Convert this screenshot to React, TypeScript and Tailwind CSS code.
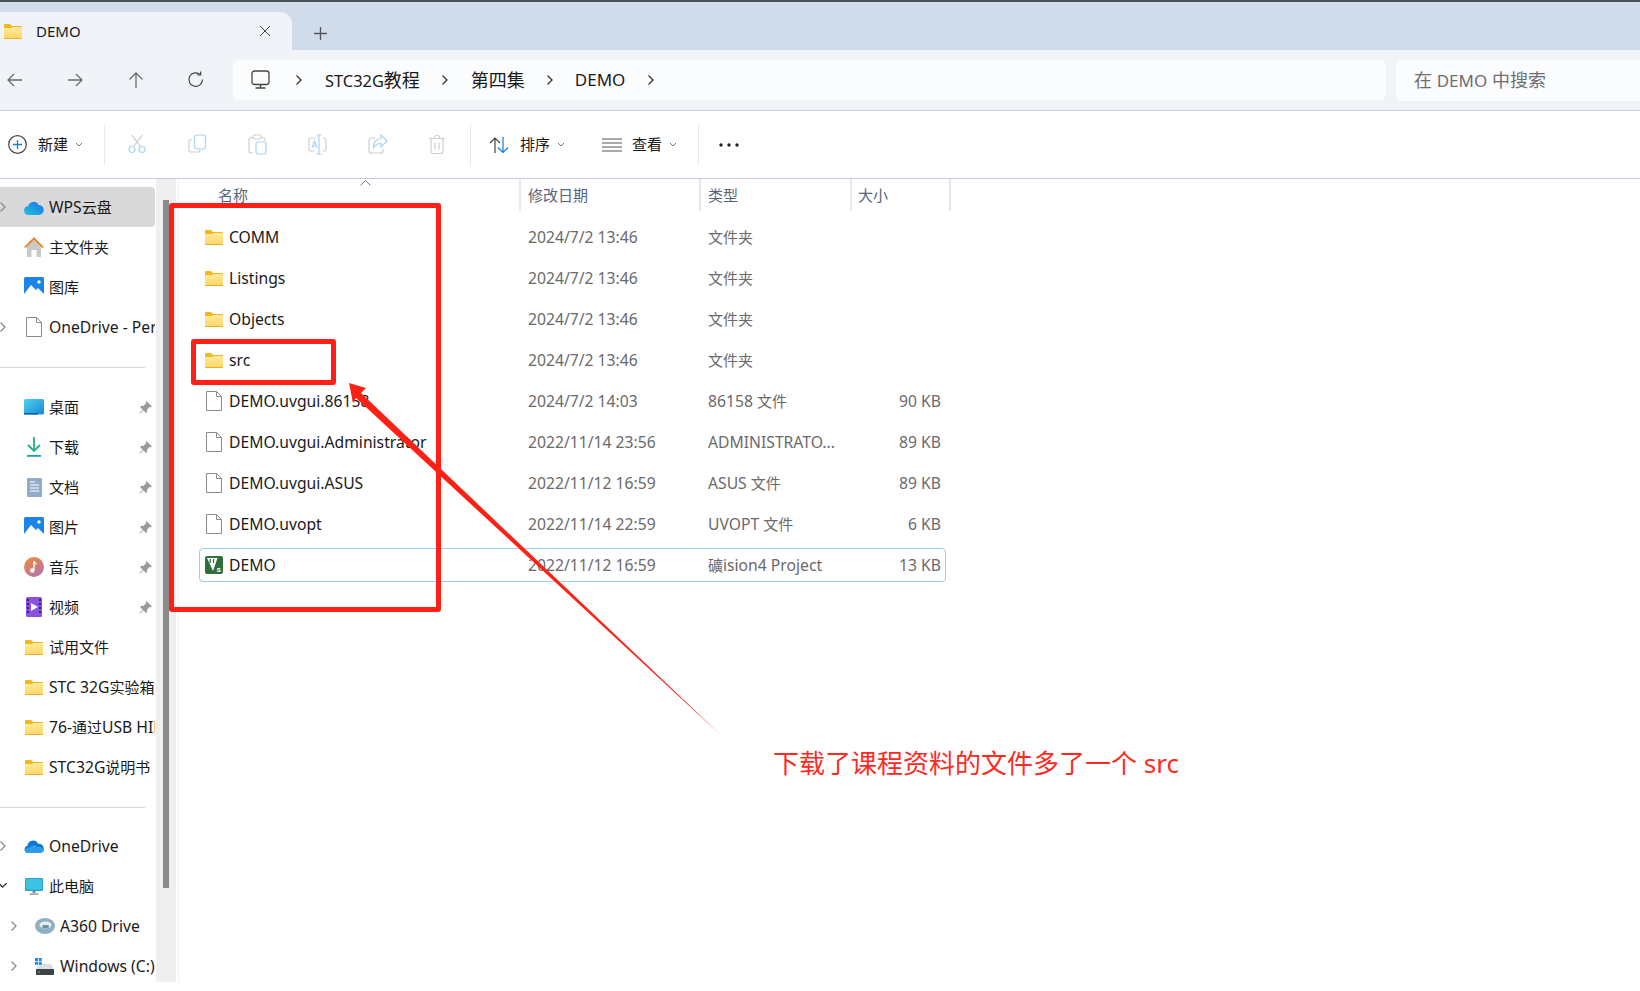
/**
 * Explorer window with red annotations on top (rect, arrow, caption).
 */
import type { ReactNode } from "react";

// ── Icons ────────────────────────────────────────────────────────────────────

function FolderIcon({ id }: { id: string }) {
  return (
    <svg width="18" height="15" viewBox="0 0 18 15" className="shrink-0">
      <defs>
        <linearGradient id={id} x1="0" y1="0" x2="0" y2="1">
          <stop offset="0" stopColor="#ffe99a" />
          <stop offset="1" stopColor="#fcd667" />
        </linearGradient>
      </defs>
      <path d="M0 1a1 1 0 0 1 1-1h5l2 2h9a1 1 0 0 1 1 1v3H0z" fill="#f2b71f" />
      <path d="M0 4h7l1.500-1H17a1 1 0 0 1 1 1v10a1 1 0 0 1-1 1H1a1 1 0 0 1-1-1z" fill={`url(#${id})`} />
      <path d="M0 14h18v.2a.8.8 0 0 1-.8.8H.8a.8.8 0 0 1-.8-.8z" fill="#e9ae2a" />
    </svg>
  );
}

function FileIcon() {
  return (
    <svg width="18" height="20" viewBox="0 0 18 20" className="shrink-0">
      <path d="M1.500.5h10l5 5v14h-15z" fill="#fff" stroke="#8b8b8b" />
      <path d="M11.500.5v5h5" fill="none" stroke="#8b8b8b" />
    </svg>
  );
}

function UvisionIcon() {
  return (
    <svg width="18" height="18" viewBox="0 0 18 18" className="shrink-0">
      <rect width="18" height="18" rx="2" fill="#2f6f3e" />
      <path d="M2 2h10.500L8 15z" fill="#fff" />
      <path d="M5.200 3v4M8.500 3v4" stroke="#2f6f3e" strokeWidth="1.300" />
      <text x="11.500" y="16" fontSize="8" fontWeight="700" fill="#fff" fontFamily="'Liberation Sans', sans-serif">s</text>
    </svg>
  );
}

function Glyph({ w = 20, h = 20, children }: { w?: number; h?: number; children: ReactNode }) {
  return (
    <svg width={w} height={h} viewBox={`0 0 ${w} ${h}`} fill="none" className="shrink-0">
      {children}
    </svg>
  );
}

function Chevron({ dark = false }: { dark?: boolean }) {
  return (
    <Glyph w={8} h={12}>
      <path d="M1.500 1.500 6 6l-4.500 4.500" stroke={dark ? "#333" : "#8a8a8a"} strokeWidth="1.300" />
    </Glyph>
  );
}

function CaretDown() {
  return (
    <Glyph w={8} h={6}>
      <path d="M1 1l3 3 3-3" stroke="#777" strokeWidth="1" />
    </Glyph>
  );
}

function PinIcon() {
  return (
    <svg width="13" height="13" viewBox="0 0 13 13" className="shrink-0">
      <path d="M7.500 0 13 5.500l-1.200.7-1-.3L8 8.700l.3 2L7 12 4.200 9.200 1 12.600.4 12l3.400-3.200L1 6l1.300-1.300 2 .3 2.800-2.800-.3-1z" fill="#9b9b9b" />
    </svg>
  );
}

const NAV_ICONS = {
  back: <path d="M16 10H2M8 4l-6 6 6 6" stroke="#6a6a6a" strokeWidth="1.300" />,
  forward: <path d="M2 10h14M10 4l6 6-6 6" stroke="#6a6a6a" strokeWidth="1.300" />,
  up: <path d="M10 18V3M3.500 9.500 10 3l6.500 6.500" stroke="#6a6a6a" strokeWidth="1.300" />,
  refresh: (
    <>
      <path d="M16.500 9.500a6.800 6.800 0 1 1-2.300-5" stroke="#444" strokeWidth="1.200" />
      <path d="M14.700 1.500v3.500h-3.500" stroke="#444" strokeWidth="1.200" />
    </>
  ),
};

const TOOL_ICONS: ReactNode[] = [
  <>
    <path d="M3.500 1 13 13M14.500 1 5 13" stroke="#c4c4c4" strokeWidth="1.100" />
    <circle cx="4" cy="15.500" r="3" stroke="#a9d3f2" strokeWidth="1.200" />
    <circle cx="14" cy="15.500" r="3" stroke="#a9d3f2" strokeWidth="1.200" />
  </>,
  <>
    <path d="M4 5.500H3a2 2 0 0 0-2 2V16a2 2 0 0 0 2 2h7a2 2 0 0 0 2-2" stroke="#cfcfcf" strokeWidth="1.200" />
    <rect x="6.500" y="1" width="11" height="14" rx="2.500" stroke="#a9d3f2" strokeWidth="1.200" />
  </>,
  <>
    <path d="M5 3.500H3a2 2 0 0 0-2 2V17a2 2 0 0 0 2 2h2M13 3.500h2a2 2 0 0 1 2 2V7" stroke="#cfcfcf" strokeWidth="1.200" />
    <rect x="5" y="1" width="8" height="4" rx="1.500" stroke="#cfcfcf" strokeWidth="1.200" />
    <rect x="8" y="8" width="10" height="12" rx="2" stroke="#a9d3f2" strokeWidth="1.200" />
  </>,
  <>
    <path d="M7 4H3a2 2 0 0 0-2 2v9a2 2 0 0 0 2 2h4M15 4h1a2 2 0 0 1 2 2v9a2 2 0 0 1-2 2h-1" stroke="#cfcfcf" strokeWidth="1.200" />
    <path d="M11 1v19M8.500 1h5M8.500 20h5" stroke="#a9d3f2" strokeWidth="1.200" />
    <path d="M4 14l2.500-7L9 14M4.800 12h3.400" stroke="#a9d3f2" strokeWidth="1.100" />
  </>,
  <>
    <path d="M7 4H3a2 2 0 0 0-2 2v11a2 2 0 0 0 2 2h10a2 2 0 0 0 2-2v-2" stroke="#cfcfcf" strokeWidth="1.200" />
    <path d="M13 1l6 6-6 6V9.500c-4 0-6 1.500-7.500 4 0-5 2.500-8.500 7.500-9z" stroke="#a9d3f2" strokeWidth="1.200" />
  </>,
  <>
    <path d="M1 4.500h16M6.500 4.500V3a2 2 0 0 1 2-1.500h1A2 2 0 0 1 11.500 3v1.500" stroke="#cfcfcf" strokeWidth="1.200" />
    <path d="M3 4.500V17a2.500 2.500 0 0 0 2.500 2.500h7A2.500 2.500 0 0 0 15 17V4.500M7 8.500v7M11 8.500v7" stroke="#cfcfcf" strokeWidth="1.200" />
  </>,
];

function WpsCloud() {
  return (
    <svg width="20" height="15" viewBox="0 0 20 15">
      <defs>
        <linearGradient id="wps" x1="0" y1="1" x2="1" y2="0">
          <stop offset="0" stopColor="#1fc8d8" />
          <stop offset="1" stopColor="#1f6cf0" />
        </linearGradient>
      </defs>
      <path d="M5 15a4.500 4.500 0 0 1-.8-9A5.500 5.500 0 0 1 14.500 5 5 5 0 0 1 15 15z" fill="url(#wps)" />
    </svg>
  );
}

function HomeIcon() {
  return (
    <svg width="20" height="20" viewBox="0 0 20 20">
      <path d="M3 9l7-6 7 6v11h-4.500v-7h-5v7H3z" fill="#c9c9c9" />
      <path d="M0 10 10 0l10 10-1.500 1L10 3 1.500 11z" fill="#e8832e" />
    </svg>
  );
}

function PictureIcon() {
  return (
    <svg width="20" height="20" viewBox="0 0 20 20">
      <rect width="20" height="19" rx="1.500" fill="#1b84e8" />
      <path d="M0 17 7 8l5 5 2-2 6 6v1.500a1 1 0 0 1-1 1H1a1 1 0 0 1-1-1z" fill="#fff" />
      <circle cx="15" cy="5" r="1.700" fill="#fff" />
    </svg>
  );
}

function DesktopIcon() {
  return (
    <svg width="20" height="16" viewBox="0 0 20 16">
      <defs>
        <linearGradient id="desk" x1="0" y1="0" x2="1" y2="1">
          <stop offset="0" stopColor="#4fd3ef" />
          <stop offset="1" stopColor="#1a86d6" />
        </linearGradient>
      </defs>
      <rect width="20" height="15.500" rx="1.500" fill="url(#desk)" />
      <rect y="14" width="14" height="1.500" fill="#0d5da6" />
    </svg>
  );
}

function DownloadIcon() {
  return (
    <svg width="16" height="20" viewBox="0 0 16 20">
      <path d="M8 0v14M2 8l6 6 6-6" fill="none" stroke="#1fb38a" strokeWidth="1.800" />
      <rect x="1" y="18" width="14" height="1.800" fill="#19a5a0" />
    </svg>
  );
}

function DocIcon() {
  return (
    <svg width="15" height="19" viewBox="0 0 15 19">
      <rect width="15" height="19" rx="1" fill="#93aac9" />
      <path d="M3 4h5M3 7h9M3 10h9M3 13h9" stroke="#fff" strokeWidth="1" />
    </svg>
  );
}

function MusicIcon() {
  return (
    <svg width="20" height="20" viewBox="0 0 20 20">
      <defs>
        <linearGradient id="music" x1="0.200" y1="0" x2="0.800" y2="1">
          <stop offset="0" stopColor="#ee8a3c" />
          <stop offset="1" stopColor="#b272b4" />
        </linearGradient>
      </defs>
      <circle cx="10" cy="10" r="10" fill="url(#music)" />
      <path d="M10 4v9" stroke="#fff" strokeWidth="1.400" />
      <path d="M10 4c1 1.500 3 1.500 3 4-1-1.500-2-1.500-3-2z" fill="#fff" />
      <circle cx="8.300" cy="13.500" r="2.200" fill="#fff" />
    </svg>
  );
}

function VideoIcon() {
  return (
    <svg width="16" height="20" viewBox="0 0 16 20">
      <rect width="16" height="20" rx="1.500" fill="#8a52e0" />
      <path d="M1 3h2M1 7h2M1 11h2M1 15h2M13 3h2M13 7h2M13 11h2M13 15h2" stroke="#22114a" strokeWidth="1.400" />
      <path d="M5 6l7 4-7 4z" fill="#fff" />
    </svg>
  );
}

function OneDriveIcon() {
  return (
    <svg width="20" height="13" viewBox="0 0 20 13">
      <path d="M4 13a3.700 3.700 0 0 1-.5-7.300A5.500 5.500 0 0 1 14 3.800 4.700 4.700 0 0 1 16 13z" fill="#0f78d4" />
      <path d="M7 6.500C9 4.500 12 5 13.500 7c3-1 6 1 6.500 3a4 4 0 0 1-4 3H4a3.700 3.700 0 0 1-3.500-3C2 8 5 7.500 7 6.500z" fill="#2b9bea" />
    </svg>
  );
}

function PcIcon() {
  return (
    <svg width="18" height="17" viewBox="0 0 18 17">
      <rect width="18" height="13" rx="1" fill="#2aa4cf" />
      <rect x="1" y="1" width="16" height="10.500" fill="#3cc3e2" />
      <path d="M7.500 13h3v2h-3zM4.500 15.500h9v1.200h-9z" fill="#7d8c98" />
    </svg>
  );
}

function A360Icon() {
  return (
    <svg width="20" height="16" viewBox="0 0 20 16">
      <ellipse cx="10" cy="8" rx="10" ry="8" fill="#8fb0c2" />
      <ellipse cx="10.500" cy="7" rx="6" ry="3.400" fill="#e6eef3" />
      <ellipse cx="10.500" cy="8.500" rx="3.500" ry="1.800" fill="#6f8ea2" />
    </svg>
  );
}

function DriveIcon() {
  return (
    <svg width="20" height="17" viewBox="0 0 20 17">
      <path d="M4 6h12l3 5H1z" fill="#dcdfe3" />
      <rect x="1" y="11" width="18" height="6" rx="0.800" fill="#3d4247" />
      <circle cx="4" cy="14" r="0.800" fill="#57e06c" />
      <path d="M0 0h3v3H0zM3.800 0h3v3h-3zM0 3.800h3v3H0zM3.800 3.800h3v3h-3z" fill="#1b8de0" />
    </svg>
  );
}

// ── Data ─────────────────────────────────────────────────────────────────────

interface NavItem {
  label: string;
  icon: ReactNode;
  arrow?: "right" | "down";
  pinned?: boolean;
  indent?: boolean;
  selected?: boolean;
}

const NAV_TOP: NavItem[] = [
  { label: "WPS云盘", icon: <WpsCloud />, arrow: "right", selected: true },
  { label: "主文件夹", icon: <HomeIcon /> },
  { label: "图库", icon: <PictureIcon /> },
  { label: "OneDrive - Personal", icon: <FileIcon />, arrow: "right" },
];

const NAV_QUICK: NavItem[] = [
  { label: "桌面", icon: <DesktopIcon />, pinned: true },
  { label: "下载", icon: <DownloadIcon />, pinned: true },
  { label: "文档", icon: <DocIcon />, pinned: true },
  { label: "图片", icon: <PictureIcon />, pinned: true },
  { label: "音乐", icon: <MusicIcon />, pinned: true },
  { label: "视频", icon: <VideoIcon />, pinned: true },
  { label: "试用文件", icon: <FolderIcon id="nf1" /> },
  { label: "STC 32G实验箱", icon: <FolderIcon id="nf2" /> },
  { label: "76-通过USB HID", icon: <FolderIcon id="nf3" /> },
  { label: "STC32G说明书", icon: <FolderIcon id="nf4" /> },
];

const NAV_BOTTOM: NavItem[] = [
  { label: "OneDrive", icon: <OneDriveIcon />, arrow: "right" },
  { label: "此电脑", icon: <PcIcon />, arrow: "down" },
  { label: "A360 Drive", icon: <A360Icon />, arrow: "right", indent: true },
  { label: "Windows (C:)", icon: <DriveIcon />, arrow: "right", indent: true },
];

const FILES = [
  { name: "COMM", date: "2024/7/2 13:46", type: "文件夹", size: "", kind: "folder" },
  { name: "Listings", date: "2024/7/2 13:46", type: "文件夹", size: "", kind: "folder" },
  { name: "Objects", date: "2024/7/2 13:46", type: "文件夹", size: "", kind: "folder" },
  { name: "src", date: "2024/7/2 13:46", type: "文件夹", size: "", kind: "folder" },
  { name: "DEMO.uvgui.86158", date: "2024/7/2 14:03", type: "86158 文件", size: "90 KB", kind: "file" },
  { name: "DEMO.uvgui.Administrator", date: "2022/11/14 23:56", type: "ADMINISTRATO...", size: "89 KB", kind: "file" },
  { name: "DEMO.uvgui.ASUS", date: "2022/11/12 16:59", type: "ASUS 文件", size: "89 KB", kind: "file" },
  { name: "DEMO.uvopt", date: "2022/11/14 22:59", type: "UVOPT 文件", size: "6 KB", kind: "file" },
  { name: "DEMO", date: "2022/11/12 16:59", type: "礦ision4 Project", size: "13 KB", kind: "project" },
];

// ── Sections ─────────────────────────────────────────────────────────────────

/** Latin runs sit a little wider than the CJK ones in the screenshot's UI font. */
function Mixed({ text }: { text: string }) {
  return (
    <>
      {text.split(/([\u4e00-\u9fff]+)/).map((run, i) => (
        <span key={i} className={i % 2 === 1 ? "text-[15px]" : "text-[15.7px]"}>
          {run}
        </span>
      ))}
    </>
  );
}

function NavRow({ item }: { item: NavItem }) {
  return (
    <div
      className={`flex h-10 w-[155px] items-center whitespace-nowrap overflow-hidden rounded-r ${
        item.selected ? "bg-[#d9d9d9]" : ""
      } ${item.indent ? "pl-[11px]" : "pl-0"}`}
    >
      <span className="flex w-[7px] shrink-0 justify-end overflow-hidden">
        {item.arrow === "right" && <Chevron />}
        {item.arrow === "down" && (
          <svg width="7" height="6" viewBox="0 0 7 6" className="shrink-0">
            <path d="M-1 0.500 2.500 4 7 0" fill="none" stroke="#333" strokeWidth="1.300" />
          </svg>
        )}
      </span>
      <span className="ml-[17px] flex w-5 shrink-0 justify-center">{item.icon}</span>
      <span className="ml-[5px] flex-1 overflow-hidden text-[#1a1a1a]">
        <Mixed text={item.label} />
      </span>
      {item.pinned && (
        <span className="mr-[3px] shrink-0">
          <PinIcon />
        </span>
      )}
    </div>
  );
}

function Sidebar() {
  return (
    <div className="flex shrink-0">
      <div className="w-[156px] overflow-hidden pt-2">
        {NAV_TOP.map((item) => (
          <NavRow key={item.label} item={item} />
        ))}
        <div className="mb-[19px] mt-5 h-px w-[145px] bg-[#d5d5d5]" />
        {NAV_QUICK.map((item) => (
          <NavRow key={item.label} item={item} />
        ))}
        <div className="mb-[18px] mt-5 h-px w-[145px] bg-[#d5d5d5]" />
        {NAV_BOTTOM.map((item) => (
          <NavRow key={item.label} item={item} />
        ))}
      </div>
      <div className="w-5 bg-[#efefef] pl-[7px] pt-[21px]">
        <div className="h-[688px] w-[6px] bg-[#8a8a8a]" />
      </div>
    </div>
  );
}

function FileList() {
  return (
    <div className="ml-[2px] flex-1 border-l border-[#f2f2f2]">
      <div className="flex h-8 text-[15px] text-[#56657c]">
        <div className="relative w-[342px] border-r-2 border-[#e8e8e8] pl-[39px] leading-[32px]">
          名称
          <svg width="11" height="6" viewBox="0 0 11 6" className="absolute left-[181px] top-[1px]">
            <path d="M.5 5.500 5.500.5l5 5" fill="none" stroke="#777" strokeWidth="1" />
          </svg>
        </div>
        <div className="w-[180px] border-r-2 border-[#e8e8e8] pl-[7px] leading-[32px]">修改日期</div>
        <div className="w-[151px] border-r-2 border-[#e8e8e8] pl-[7px] leading-[32px]">类型</div>
        <div className="w-[99px] border-r-2 border-[#e8e8e8] pl-[6px] leading-[32px]">大小</div>
      </div>
      <div className="ml-5 flex w-[747px] flex-col gap-[7px] pt-[9px]">
        {FILES.map((file) => (
          <div
            key={file.name}
            className={`flex h-[34px] items-center whitespace-nowrap rounded-sm border ${
              file.kind === "project" ? "border-[#99cdf5]" : "border-transparent"
            }`}
          >
            <span className="flex w-[29px] shrink-0 justify-end pr-[6px]">
              {file.kind === "folder" && <FolderIcon id={`ff-${file.name}`} />}
              {file.kind === "file" && <FileIcon />}
              {file.kind === "project" && <UvisionIcon />}
            </span>
            <span className="w-[299px] text-[#1a1a1a]"><Mixed text={file.name} /></span>
            <span className="w-[180px] text-[#6a6a6a]"><Mixed text={file.date} /></span>
            <span className="w-[150px] text-[#6a6a6a]"><Mixed text={file.type} /></span>
            <span className="w-[83px] text-right text-[#6a6a6a]"><Mixed text={file.size} /></span>
          </div>
        ))}
      </div>
    </div>
  );
}

export default function App() {
  return (
    <div className="relative h-[991px] w-[1640px] overflow-hidden bg-white font-['Noto_Sans','Noto_Sans_CJK_SC',sans-serif]">
      {/* Tab strip */}
      <div className="flex h-[50px] border-t-2 border-[#4b5159] bg-[#d1dceb]">
        <div className="mt-[10px] flex w-[292px] items-center rounded-tr-xl bg-[#f0f4f9]">
          <span className="ml-1">
            <FolderIcon id="tabf" />
          </span>
          <span className="ml-[14px] flex-1 text-[15px] text-[#1a1a1a]">DEMO</span>
          <svg width="12" height="12" viewBox="0 0 12 12" className="mr-[21px]">
            <path d="M1 1l10 10M11 1 1 11" stroke="#444" strokeWidth="1" />
          </svg>
        </div>
        <div className="ml-[22px] mt-[25px]">
          <svg width="13" height="13" viewBox="0 0 13 13">
            <path d="M6.500 0v13M0 6.500h13" stroke="#555" strokeWidth="1.300" />
          </svg>
        </div>
      </div>

      {/* Nav bar */}
      <div className="flex h-[61px] items-center border-b border-[#c3cedd] bg-[#f0f4f9] pl-[6px]">
        <span className="flex w-[60px]"><Glyph w={20} h={20}>{NAV_ICONS.back}</Glyph></span>
        <span className="flex w-[60px]"><Glyph w={20} h={20}>{NAV_ICONS.forward}</Glyph></span>
        <span className="flex w-[60px]"><Glyph w={20} h={20}>{NAV_ICONS.up}</Glyph></span>
        <span className="flex w-[47px]"><Glyph w={20} h={20}>{NAV_ICONS.refresh}</Glyph></span>
        <div className="flex h-10 w-[1153px] items-center rounded-md bg-[#fbfcfe] pl-[18px] text-[18px] text-[#1a1a1a]">
          <Glyph w={19} h={20}>
            <rect x="1" y="1" width="17" height="13.500" rx="2.500" stroke="#444" strokeWidth="1.300" />
            <path d="M9.500 14.500v3M4.500 18h10" stroke="#444" strokeWidth="1.300" />
          </Glyph>
          <span className="ml-[25px]"><Chevron dark /></span>
          <span className="ml-[22px]"><span className="text-[16.4px]">STC32G</span>教程</span>
          <span className="ml-[21px]"><Chevron dark /></span>
          <span className="ml-[22px]">第四集</span>
          <span className="ml-[21px]"><Chevron dark /></span>
          <span className="ml-[21px] text-[17px]">DEMO</span>
          <span className="ml-[22px]"><Chevron dark /></span>
        </div>
        <div className="ml-[10px] flex h-[41px] flex-1 items-center rounded-l-md bg-[#fbfcfe] pl-[18px] text-[18px] text-[#6e6e6e]">
          <span>在 <span className="text-[17px]">DEMO</span> 中搜索</span>
        </div>
      </div>

      {/* Command bar */}
      <div className="flex h-[68px] items-center border-b border-[#c3cedd] pl-2 text-[14px] text-[#1a1a1a]">
        <Glyph w={19} h={19}>
          <circle cx="9.500" cy="9.500" r="8.800" stroke="#444" strokeWidth="1.200" />
          <path d="M9.500 5v9M5 9.500h9" stroke="#0f7fd8" strokeWidth="1.300" />
        </Glyph>
        <span className="ml-[11px] text-[15px]">新建</span>
        <span className="ml-[7px]"><CaretDown /></span>
        <div className="ml-[21px] h-10 w-px bg-[#e8e8e8]" />
        {TOOL_ICONS.map((icon, i) => (
          <span key={i} className={`flex w-5 justify-center ${i === 0 ? "ml-[23px]" : "ml-10"}`}>
            <Glyph w={20} h={21}>{icon}</Glyph>
          </span>
        ))}
        <div className="ml-[22px] h-10 w-px bg-[#e8e8e8]" />
        <span className="ml-[18px]">
          <Glyph w={20} h={20}>
            <path d="M6 18V3M1 8l5-5 5 5" stroke="#444" strokeWidth="1.200" />
            <path d="M14 2v15.500M9 12.500l5 5 5-5" stroke="#0f7fd8" strokeWidth="1.200" />
          </Glyph>
        </span>
        <span className="ml-[11px] text-[15px]">排序</span>
        <span className="ml-[7px]"><CaretDown /></span>
        <span className="ml-[37px]">
          <Glyph w={20} h={14}>
            <path d="M0 1h20M0 5h20M0 9h20M0 13h20" stroke="#555" strokeWidth="1.200" />
          </Glyph>
        </span>
        <span className="ml-[10px] text-[15px]">查看</span>
        <span className="ml-[7px]"><CaretDown /></span>
        <div className="ml-[21px] h-10 w-px bg-[#e8e8e8]" />
        <span className="ml-[20px]">
          <Glyph w={20} h={4}>
            <circle cx="2" cy="2" r="1.700" fill="#222" />
            <circle cx="10" cy="2" r="1.700" fill="#222" />
            <circle cx="18" cy="2" r="1.700" fill="#222" />
          </Glyph>
        </span>
      </div>

      {/* Body */}
      <div className="flex h-[803px]">
        <Sidebar />
        <FileList />
      </div>

      {/* Red annotations laid over the window */}
      <div className="absolute left-[169px] top-[203px] h-[409px] w-[272px] rounded-[3px] border-[5px] border-[#ff2015]" />
      <div className="absolute left-[191px] top-[339px] h-[46px] w-[145px] rounded-[3px] border-[5px] border-[#ff2015]" />
      <svg width="1640" height="991" viewBox="0 0 1640 991" className="pointer-events-none absolute left-0 top-0">
        <defs>
          <linearGradient id="arrowFade" gradientUnits="userSpaceOnUse" x1="349" y1="383" x2="723" y2="737">
            <stop offset="0.930" stopColor="#ff2015" />
            <stop offset="1" stopColor="#ff2015" stopOpacity="0.300" />
          </linearGradient>
        </defs>
        <polygon points="349,383 366,388 361,393 726,740 356,398 353,403" fill="url(#arrowFade)" />
      </svg>
      <span className="absolute left-[773px] top-[743px] whitespace-nowrap text-[26px] leading-[40px] text-[#ff2a1f]">
        下载了课程资料的文件多了一个 src
      </span>
    </div>
  );
}
